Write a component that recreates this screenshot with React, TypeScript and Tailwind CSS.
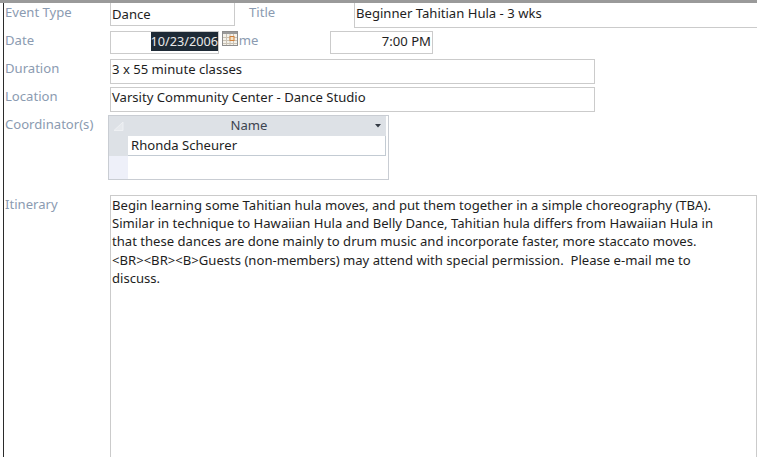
const labelCls = "text-[13.1px] leading-[18px] text-[#8b9bb1] whitespace-nowrap";
const boxCls = "border border-[#cbcbcb] bg-white text-[13.1px] text-[#1e1e1e] whitespace-nowrap overflow-hidden";

const itinerary = [
  "Begin learning some Tahitian hula moves, and put them together in a simple choreography (TBA).",
  "Similar in technique to Hawaiian Hula and Belly Dance, Tahitian hula differs from Hawaiian Hula in",
  "that these dances are done mainly to drum music and incorporate faster, more staccato moves.",
  "<BR><BR><B>Guests (non-members) may attend with special permission.  Please e-mail me to",
  "discuss.",
];

function CalendarIcon() {
  return (
    <svg width="16" height="15" viewBox="0 0 16 15" className="absolute left-[218px] top-[28px]">
      <rect x="0.5" y="0.5" width="15" height="14" fill="#f4f1ea" stroke="#8d8d8d" />
      <rect x="1" y="1" width="14" height="2" fill="#9a9a9a" />
      <path d="M1 6.5h14M1 9.5h14M1 12.5h14M4.5 3v11M8 3v11M11.5 3v11" stroke="#c9c2b4" strokeWidth="1" fill="none" />
      <rect x="8" y="5.5" width="4" height="4" fill="#f3e3c8" stroke="#d0803a" />
    </svg>
  );
}

export default function App() {
  return (
    <div className="w-[757px] h-[457px] overflow-hidden bg-white border-t-[3px] border-t-[#9a9a9a] pl-[3px] font-['Noto_Sans',sans-serif]">
      <div className="relative h-full border-l border-l-[#2b2b2b]">
        <div className="flex h-[24px]">
          <div className={`${labelCls} w-[106px] pl-[1px]`}>Event Type</div>
          <div className={`${boxCls} w-[125px] h-[23px] border-t-0 pl-[1px] pt-[2px]`}>Dance</div>
          <div className={`${labelCls} ml-[14px] w-[105px]`}>Title</div>
          <div className={`${boxCls} flex-1 h-[25px] border-t-0 border-r-0 pl-[1px] pt-[1px]`}>Beginner Tahitian Hula - 3 wks</div>
        </div>

        <div className="flex h-[23px] mt-[4px]">
          <div className={`${labelCls} w-[106px] pl-[1px]`}>Date</div>
          <div className={`${boxCls} w-[109px] flex justify-end`}>
            <span className="bg-[#1e2a36] text-[#e8e8e8] text-[12.7px] h-[19px] leading-[19px]">10/23/2006</span>
          </div>
          <div className={`${labelCls} w-[111px] pl-[9px]`}>Time</div>
          <div className={`${boxCls} w-[103px] text-right pr-[1px]`}>7:00 PM</div>
        </div>

        <div className="flex h-[25px] mt-[5px]">
          <div className={`${labelCls} w-[106px] pl-[1px]`}>Duration</div>
          <div className={`${boxCls} w-[485px] pl-[1px]`}>3 x 55 minute classes</div>
        </div>

        <div className="flex h-[25px] mt-[3px]">
          <div className={`${labelCls} w-[106px] pl-[1px]`}>Location</div>
          <div className={`${boxCls} w-[485px] pl-[1px]`}>Varsity Community Center - Dance Studio</div>
        </div>

        <div className="flex mt-[3px]">
          <div className={`${labelCls} w-[104px] pl-[1px]`}>Coordinator(s)</div>
          <div className="w-[281px] h-[65px] border border-[#c9cdd3] bg-white flex text-[13.1px] text-[#1e1e1e]">
            <div className="w-[19px] flex flex-col">
              <div className="h-[40px] bg-[#dde1e6] flex justify-center pt-[5px]">
                <svg width="12" height="10" viewBox="0 0 12 10">
                  <path d="M1 9.5L10 1v8.5z" fill="#e6e9ed" stroke="#eef0f3" />
                </svg>
              </div>
              <div className="flex-1 bg-[#eef0f9]" />
            </div>
            <div className="flex-1 flex flex-col pr-[2px]">
              <div className="h-[20px] bg-[#dde1e6] flex items-center relative">
                <span className="flex-1 text-center text-[#3c4450] pr-[16px]">Name</span>
                <svg width="6" height="4" viewBox="0 0 6 4" className="absolute right-[5px] top-[8px]">
                  <path d="M0 0h6L3 3.5z" fill="#333a44" />
                </svg>
              </div>
              <div className="h-[20px] border-b border-r border-[#c3cbd3] border-l-0 pl-[3px] leading-[19px]">Rhonda Scheurer</div>
            </div>
          </div>
        </div>

        <div className="flex mt-[15px]">
          <div className={`${labelCls} w-[106px] pl-[1px]`}>Itinerary</div>
          <div className={`${boxCls} flex-1 h-[270px] pl-[1px] leading-[18.2px] whitespace-pre`}>
            {itinerary.map((line) => (
              <div key={line}>{line}</div>
            ))}
          </div>
        </div>

        <CalendarIcon />
      </div>
    </div>
  );
}
